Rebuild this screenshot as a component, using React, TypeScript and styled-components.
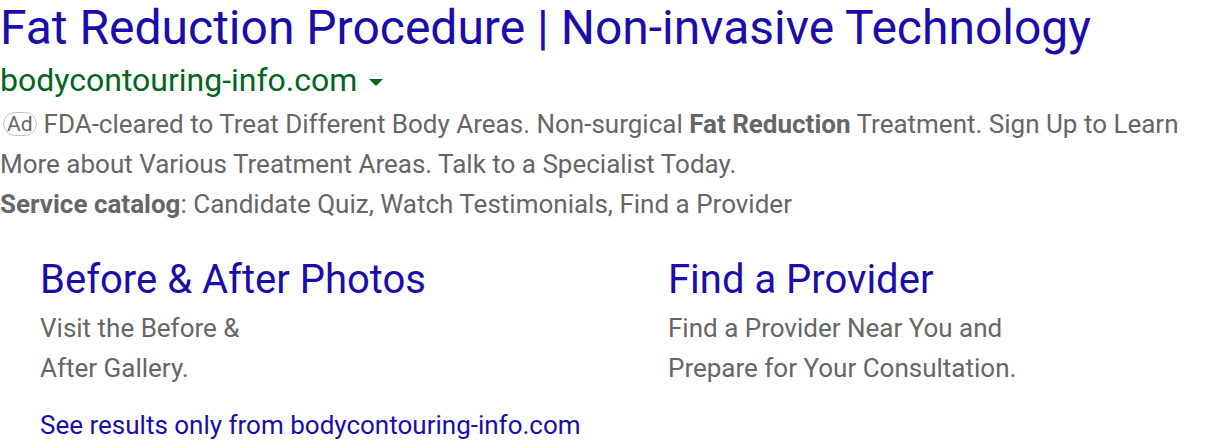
import styled, { createGlobalStyle } from "styled-components";

const GlobalStyle = createGlobalStyle`
  body {
    margin: 0;
    background: #fff;
    font-family: Roboto, "Noto Sans", sans-serif;
  }
`;

const Result = styled.div`
  display: flex;
  flex-direction: column;
`;

const Title = styled.a`
  color: #1a0dab;
  font-size: 48px;
  line-height: 56px;
  text-decoration: none;
  white-space: nowrap;
`;

const UrlRow = styled.div`
  display: flex;
  align-items: center;
  gap: 12px;
  color: #006621;
  font-size: 32px;
  line-height: 48px;
`;

const Caret = styled.span`
  width: 0;
  height: 0;
  border-left: 7px solid transparent;
  border-right: 7px solid transparent;
  border-top: 7px solid #006621;
  margin-top: 4px;
`;

const Description = styled.div`
  color: #666;
  font-size: 26px;
  line-height: 40px;
  width: 1200px;
`;

const AdBadge = styled.span`
  display: inline-block;
  vertical-align: 2px;
  border: 1px solid #c6c6c6;
  border-radius: 12px;
  padding: 0 3px;
  margin-left: 3px;
  margin-right: 7px;
  font-size: 21px;
  line-height: 22px;
  color: #666;
`;

const Bold = styled.b`
  font-weight: 700;
`;

const Sitelinks = styled.div`
  display: grid;
  grid-template-columns: 628px 1fr;
  padding: 28px 0 0 40px;
`;

const Sitelink = styled.div`
  display: flex;
  flex-direction: column;
`;

const SitelinkTitle = styled.a`
  color: #1a0dab;
  font-size: 40px;
  line-height: 56px;
  text-decoration: none;
`;

const SitelinkText = styled.div`
  color: #666;
  font-size: 26px;
  line-height: 40px;
`;

const MoreLink = styled.a`
  display: block;
  padding: 17px 0 0 40px;
  color: #1a0dab;
  font-size: 26px;
  line-height: 40px;
  text-decoration: none;
`;

const sitelinks = [
  { title: "Before & After Photos", lines: ["Visit the Before &", "After Gallery."] },
  {
    title: "Find a Provider",
    lines: ["Find a Provider Near You and", "Prepare for Your Consultation."],
  },
];

export default function App() {
  return (
    <>
      <GlobalStyle />
      <Result>
        <Title href="#">Fat Reduction Procedure | Non-invasive Technology</Title>
        <UrlRow>
          bodycontouring-info.com
          <Caret />
        </UrlRow>
        <Description>
          <AdBadge>Ad</AdBadge>
          FDA-cleared to Treat Different Body Areas. Non-surgical <Bold>Fat Reduction</Bold>{" "}
          Treatment. Sign Up to Learn More about Various Treatment Areas. Talk to a Specialist Today.
        </Description>
        <Description>
          <Bold>Service catalog</Bold>: Candidate Quiz, Watch Testimonials, Find a Provider
        </Description>
        <Sitelinks>
          {sitelinks.map((s) => (
            <Sitelink key={s.title}>
              <SitelinkTitle href="#">{s.title}</SitelinkTitle>
              {s.lines.map((l) => (
                <SitelinkText key={l}>{l}</SitelinkText>
              ))}
            </Sitelink>
          ))}
        </Sitelinks>
        <MoreLink href="#">See results only from bodycontouring-info.com</MoreLink>
      </Result>
    </>
  );
}
